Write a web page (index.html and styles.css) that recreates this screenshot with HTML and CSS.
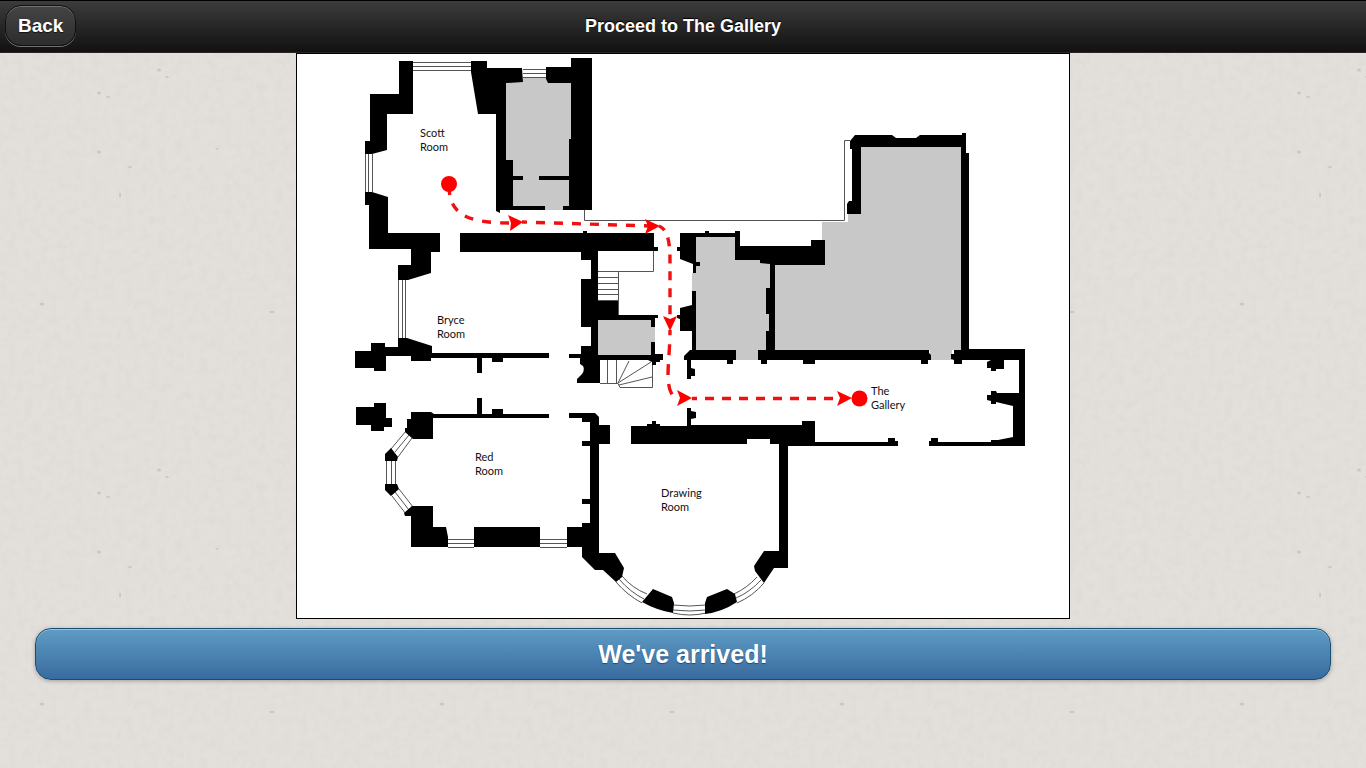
FILE: index.html
```html
<!DOCTYPE html>
<html lang="en">
<head>
<meta charset="utf-8">
<meta name="viewport" content="width=device-width, initial-scale=1">
<title>Proceed to The Gallery</title>
<link rel="stylesheet" href="styles.css">
</head>
<body>
<header class="bar">
  <button class="back" type="button">Back</button>
  <h1 class="title">Proceed to The Gallery</h1>
</header>
<main class="content">
  <svg class="map" viewBox="297 54 772 564" role="img" aria-label="Floor plan with a route from the Scott Room to The Gallery">
    <g class="closed">
      <path d="M505 82H523V77H546L548 82H571V206H563V210H545V207H505Z"/>
      <path d="M598 320H655V355H598Z"/>
      <path d="M696 237H735V260H760L770 264V350H758V360H736V350H696V291H692V273H696Z"/>
      <path d="M775 265H825V240H822V222H848V213H861V147H961V350H952V360H930V350H775Z"/>
    </g>
    <g class="thin">
      <path d="M413 62.500H471M413 66.500H471M413 70.500H471M523 69.500H546M523 73.500H546M523 77.500H546"/>
      <path d="M365.500 154V192M368.500 154V192M372.500 154V192M398.500 280V338M402.500 280V338M405.500 280V338"/>
      <path d="M386.500 461V484M391.500 461V484M395.500 461V484M448 539.500H474M448 543.500H474M448 547.500H474M540 539.500H567M540 543.500H567M540 547.500H567"/>
      <path d="M406 431L391 449M409 435L395 452M412 438L398 457M392 496L406 514M395 492L409 510M399 489L413 507"/>
      <path d="M584.500 210V220.500H844.500V140.500H850"/>
      <path d="M653.500 251V271.500H598M618.500 272V315M598 277.500H618M598 283.500H618M598 289.500H618M598 294.500H618M598 300.500H618"/>
      <path d="M600 383.500H618L620 387.500H652.500V361M607.500 360V383M616.500 360V383M618 383L629 361M618 383L651 362M619 385L652 377"/>
      <path d="M616 582Q627 595 642 603M619 579Q630 592 644 599M622 576Q632 588 647 594M673 605Q690 607 706 605M673 610Q690 612 706 610M673 613Q690 617 706 613M737 603Q753 596 764 583M736 598Q750 592 761 580M734 594Q747 588 757 577"/>
    </g>
    <g class="walls">
      <path d="M399 61H413V114H387V150L372 154H365V141H370V94H399Z"/>
      <path d="M365 192H372L388 197V233H440V252H431V273L408 280H398V265H411V249H369V205H365Z"/>
      <path d="M398 338H407L432 346V353H549V358H503V362H492V358H482V373H477V358H431V361H411V356H386V371H374V368H355V351H371V343H385V347H398Z"/>
      <path d="M356 407H374V403H386V418H392V427H384V431H371V425H356Z"/>
      <path d="M411 412H431L434 414H477V398H482V414H492V409H503V414H549V418H433V439H413L405 432V428H407V419H411Z"/>
      <path d="M385 454L391 448L398 457L397 461H385ZM385 484H397L399 489L391 496L385 490Z"/>
      <path d="M412 506H433V527H446L448 537V547H411V516H405L404 513ZM474 527H540V547H474Z"/>
      <path d="M567 527H582V523H590V504H582V499H590V446H582V441H590V422H582V418H569V413H595L599 417V425H610V444H599V553H615L624 568L622 577L616 582L603 570H595L582 557V547H567Z"/>
      <path d="M471 61H487V68H522L523 82L506 83V160H513V176H523V180H513V206H545V210H500V213L496 211V114H478L471 72Z"/>
      <path d="M546 67H571V58H592V210H563V206H569V180H539V176H569V139H571V83H548L546 79Z"/>
      <path d="M460 233H583V231H587V233H654V247H658V251H598V301H618V315H658V318H655V327H651V320H598V355H651V342H655V354H663V360H660V362H656V365H652V362L648 360H600V383H577V379L582 374Q585 370 583 366L580 364V358H569V354H581V346H591V327H581V279H591V260H581V252H460Z"/>
      <path d="M680 233H705V231H709V233H735V231H740V246H811V240H825V265H775V350H929V353L931 355V360H928V364H921V360H815V364H803V360H767V364H761V360H758V350H766V331H769V314H766V288H770V264L760 263V260H735V237H696V262H700V266H696V273H693V264L680 259V251H677V247H680Z"/>
      <path d="M680 308L692 305V291H696V350H736V360H733V364H727V360H691V368L695 369V376H691V379H687V360H684V356L690 350H692V331H680V319L677 318V315H680Z"/>
      <path d="M850 141L855 135H892L896 138H916L920 135H962V133H966V153H969V349H1025V446H929V441H931V438H938V442H991V440H998L1013 437V406L996 402V404H991V401L987 400V395H991V391H996L997 393H1019V360H1004V369H996V371H991V368H987V362L991 360H962V364H954V360L951 359V354H954V350H961V147H861V214H847V204L849 201H852V149H850Z"/>
      <path d="M631 426H647V424H652V421H656V424H660V426H687V408H691V411L696 412V418L691 419V425H802V421H815V442H888V438H895V441H898V446H788V568H774L764 583L755 571L754 566L764 551H779V444H770V439H747V444H631Z"/>
      <path d="M653 589L672 597L674 603L673 613Q656 610 642 602ZM707 597L727 589L735 594L737 602Q722 612 705 614V603Z"/>
    </g>
    <g class="route">
      <path d="M449 187C450 212 463 223 509 223" stroke-dasharray="9 9" stroke-dashoffset="1"/>
      <path d="M522 222L650 226" stroke-dasharray="9 9" stroke-dashoffset="4"/>
      <path d="M659 226C670 230 670 250 670 264V318" stroke-dasharray="9 8" stroke-dashoffset="2"/>
      <path d="M670 330C670 360 664 384 673 396" stroke-dasharray="11 9" stroke-dashoffset="6"/>
      <path d="M692 398.500H842" stroke-dasharray="9 8" stroke-dashoffset="4"/>
    </g>
    <g class="marks">
      <circle cx="449" cy="184" r="8"/>
      <circle cx="859.500" cy="398.500" r="8"/>
      <path d="M523 222L508 215L511 223L510 231ZM660 226L645 219L648 226L645 234ZM670 331L663 316L670 319L677 316ZM692 398L677 390L680 398L677 406ZM852 398L837 391L840 398L837 406Z"/>
    </g>
    <g class="labels">
      <text x="420" y="137">Scott<tspan x="420" dy="14">Room</tspan></text>
      <text x="437" y="324">Bryce<tspan x="437" dy="14">Room</tspan></text>
      <text x="475" y="461">Red<tspan x="475" dy="14">Room</tspan></text>
      <text x="661" y="497">Drawing<tspan x="661" dy="14">Room</tspan></text>
      <text x="871" y="395">The<tspan x="871" dy="14">Gallery</tspan></text>
    </g>
  </svg>
  <button class="arrived" type="button">We've arrived!</button>
</main>
</body>
</html>
```
FILE: styles.css
```css
* {
  box-sizing: border-box;
}

body {
  margin: 0;
  min-height: 100vh;
  font-family: Helvetica, "Liberation Sans", Arial, sans-serif;
  background-color: #e3e0dc;
  background-image: url("data:image/svg+xml,%3Csvg xmlns='http://www.w3.org/2000/svg' width='400' height='400'%3E%3Cfilter id='g' x='0' y='0' width='1' height='1'%3E%3CfeTurbulence type='fractalNoise' baseFrequency='.12' numOctaves='5' seed='4' stitchTiles='stitch'/%3E%3CfeColorMatrix values='0 0 0 0 .48 0 0 0 0 .45 0 0 0 0 .42 .22 0 0 0 -.08'/%3E%3C/filter%3E%3Crect width='400' height='400' filter='url(%23g)'/%3E%3Cg fill='%23837b73' opacity='.25'%3E%3Cellipse cx='99' cy='93' rx='2' ry='1.500'/%3E%3Cellipse cx='108' cy='97' rx='2' ry='1'/%3E%3Cellipse cx='159' cy='70' rx='2' ry='1.500'/%3E%3Cellipse cx='167' cy='77' rx='2' ry='1'/%3E%3Cellipse cx='99' cy='152' rx='2' ry='1.500'/%3E%3Cellipse cx='130' cy='167' rx='2' ry='1'/%3E%3Cellipse cx='217' cy='149' rx='1' ry='1'/%3E%3Cellipse cx='120' cy='195' rx='1' ry='2.500'/%3E%3Cellipse cx='42' cy='304' rx='2' ry='1.500'/%3E%3Cellipse cx='272' cy='312' rx='3' ry='1'/%3E%3C/g%3E%3C/svg%3E");
}

.bar {
  display: grid;
  grid-template-columns: 1fr auto 1fr;
  align-items: center;
  height: 53px;
  padding: 0 5px 2px;
  border-top: 1px solid #000;
  border-bottom: 1px solid #2a2522;
  background: linear-gradient(#3c3c3c, #111);
  color: #fff;
}

.back {
  justify-self: start;
  height: 41px;
  padding: 0 12px;
  border: 1px solid #111;
  border-radius: 16px;
  background: linear-gradient(#444, #2d2d2d);
  box-shadow: inset 0 1px 0 rgba(255, 255, 255, 0.25), 0 1px 0 rgba(255, 255, 255, 0.4);
  color: #fff;
  font: bold 19px Helvetica, "Liberation Sans", Arial, sans-serif;
  text-shadow: 0 1px 1px #111;
}

.title {
  margin: 0;
  font-size: 18px;
  line-height: 24px;
  text-shadow: 0 -1px 1px #000;
}

.content {
  display: flex;
  flex-direction: column;
  align-items: center;
  gap: 9px;
  padding: 0 35px;
}

.map {
  display: block;
  width: 100%;
  max-width: 774px;
  border: 1px solid #000;
  background: #fff;
}

.closed {
  fill: #c8c8c8;
}

.thin {
  fill: none;
  stroke: #555;
  stroke-width: 1;
}

.walls {
  fill: #000;
}

.route {
  fill: none;
  stroke: #f01010;
  stroke-width: 3.4;
}

.marks {
  fill: #f00;
}

.labels {
  fill: #111;
  font: 11px Lato, "Open Sans", sans-serif;
}

.arrived {
  width: 100%;
  height: 52px;
  border: 1px solid #145072;
  border-radius: 16px;
  background: linear-gradient(#5f9cc5, #396b9e);
  box-shadow: inset 0 1px 0 rgba(255, 255, 255, 0.4), 0 1px 4px rgba(0, 0, 0, 0.3);
  color: #fff;
  font: bold 25px Helvetica, "Liberation Sans", Arial, sans-serif;
  text-shadow: 0 1px 1px #194b7e;
}
```
